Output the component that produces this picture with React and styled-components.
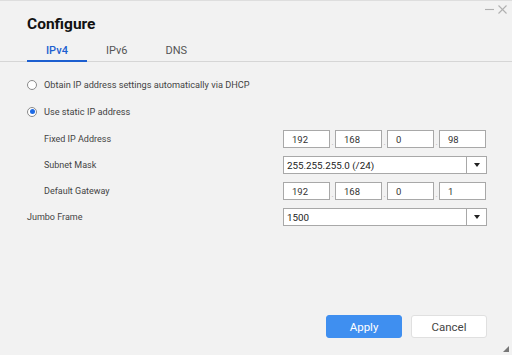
import React, { useState } from "react";
import styled, { createGlobalStyle } from "styled-components";

const GlobalStyle = createGlobalStyle`
  html, body {
    margin: 0;
    padding: 0;
    background: #f2f2f2;
  }
  * {
    box-sizing: border-box;
  }
`;

const Window = styled.div`
  position: relative;
  height: 355px;
  display: flex;
  flex-direction: column;
  background: #f2f2f2;
  border-top: 1px solid #dedede;
  font-family: Roboto, "Liberation Sans", sans-serif;
  color: #444;
`;

const TitleBar = styled.div`
  display: flex;
  justify-content: space-between;
  align-items: flex-start;
  padding: 13px 0 0 27px;
  height: 38px;
`;

const Title = styled.h1`
  margin: 0;
  font-size: 15.5px;
  font-weight: 700;
  color: #111;
  line-height: 20px;
`;

const Controls = styled.div`
  display: flex;
  gap: 4px;
  padding: 0 5px 0 0;
  margin-top: -9px;
  color: #b0b0b0;
`;

const TabBar = styled.div`
  display: flex;
  padding: 0 0 0 27px;
  border-bottom: 1px solid #d6d6d6;
  height: 23px;
`;

const Tab = styled.div`
  padding: 2px 19px 0;
  font-size: 11px;
  line-height: 19px;
  color: ${(p) => (p.$active ? "#1d5fd0" : "#555")};
  font-weight: ${(p) => (p.$active ? 500 : 400)};
  border-bottom: 2px solid ${(p) => (p.$active ? "#1d5fd0" : "transparent")};
  margin-bottom: -1px;
  cursor: pointer;
`;

const Content = styled.div`
  flex: 1;
  display: flex;
  flex-direction: column;
  padding: 9px 25px 0 27px;
`;

const RadioRow = styled.label`
  display: flex;
  align-items: center;
  height: 27px;
  font-size: 9.2px;
  color: #444;
  cursor: pointer;
`;

const RadioDot = styled.span`
  width: 10px;
  height: 10px;
  border-radius: 50%;
  border: 1px solid #8a8a8a;
  background: #fff;
  margin: 0 7px 0 0;
  display: flex;
  align-items: center;
  justify-content: center;
  &::after {
    content: "";
    width: 5px;
    height: 5px;
    border-radius: 50%;
    background: ${(p) => (p.$checked ? "#1d6ae5" : "transparent")};
  }
`;

const FieldGroup = styled.div`
  display: flex;
  flex-direction: column;
  margin-top: 1px;
`;

const FieldRow = styled.div`
  display: flex;
  align-items: center;
  justify-content: space-between;
  height: 26px;
  padding-left: ${(p) => (p.$indent ? "17px" : "0")};
`;

const Label = styled.span`
  font-size: 9px;
  color: #444;
`;

const IpBox = styled.div`
  display: flex;
  align-items: center;
  width: 204px;
`;

const Octet = styled.div`
  width: 47px;
  height: 18px;
  background: #fff;
  border: 1px solid #a8a8a8;
  font-size: 9.5px;
  color: #333;
  display: flex;
  align-items: center;
  padding-left: 8px;
`;

const Dot = styled.span`
  width: 5px;
  text-align: center;
  font-size: 8px;
  color: #aaa;
  align-self: flex-end;
  line-height: 10px;
`;

const Select = styled.div`
  width: 204px;
  height: 18px;
  display: flex;
  background: #fff;
  border: 1px solid #a8a8a8;
  font-size: 9.8px;
  color: #222;
`;

const SelectValue = styled.div`
  flex: 1;
  display: flex;
  align-items: center;
  padding-left: 3px;
`;

const SelectArrow = styled.div`
  width: 20px;
  border-left: 1px solid #a8a8a8;
  display: flex;
  align-items: center;
  justify-content: center;
  &::after {
    content: "";
    border-left: 3px solid transparent;
    border-right: 3px solid transparent;
    border-top: 4px solid #222;
  }
`;

const Footer = styled.div`
  display: flex;
  justify-content: flex-end;
  gap: 9px;
  padding: 0 25px 17px 0;
`;

const Button = styled.button`
  width: 76px;
  height: 23px;
  border-radius: 3px;
  font-family: Roboto, "Liberation Sans", sans-serif;
  font-size: 11.5px;
  cursor: pointer;
  border: 1px solid ${(p) => (p.$primary ? "#3f8ff0" : "#e0e0e0")};
  background: ${(p) => (p.$primary ? "#3f8ff0" : "#fff")};
  color: ${(p) => (p.$primary ? "#fff" : "#444")};
`;

const Grip = styled.svg`
  position: absolute;
  right: 3px;
  bottom: 3px;
`;

const IpField = ({ parts }) => (
  <IpBox>
    {parts.map((p, i) => (
      <React.Fragment key={i}>
        {i > 0 && <Dot>.</Dot>}
        <Octet>{p}</Octet>
      </React.Fragment>
    ))}
  </IpBox>
);

const App = () => {
  const [tab, setTab] = useState("IPv4");
  const [mode, setMode] = useState("static");

  return (
    <>
      <GlobalStyle />
      <Window>
        <TitleBar>
          <Title>Configure</Title>
          <Controls>
            <svg width="9" height="9" viewBox="0 0 9 9">
              <line x1="0" y1="4.5" x2="9" y2="4.5" stroke="currentColor" strokeWidth="1.1" />
            </svg>
            <svg width="9" height="9" viewBox="0 0 9 9">
              <line x1="0.5" y1="0.5" x2="8.5" y2="8.5" stroke="currentColor" strokeWidth="1.1" />
              <line x1="8.5" y1="0.5" x2="0.5" y2="8.5" stroke="currentColor" strokeWidth="1.1" />
            </svg>
          </Controls>
        </TitleBar>

        <TabBar>
          {["IPv4", "IPv6", "DNS"].map((t) => (
            <Tab key={t} $active={tab === t} onClick={() => setTab(t)}>
              {t}
            </Tab>
          ))}
        </TabBar>

        <Content>
          <RadioRow onClick={() => setMode("dhcp")}>
            <RadioDot $checked={mode === "dhcp"} />
            Obtain IP address settings automatically via DHCP
          </RadioRow>
          <RadioRow onClick={() => setMode("static")}>
            <RadioDot $checked={mode === "static"} />
            Use static IP address
          </RadioRow>

          <FieldGroup>
            <FieldRow $indent>
              <Label>Fixed IP Address</Label>
              <IpField parts={["192", "168", "0", "98"]} />
            </FieldRow>
            <FieldRow $indent>
              <Label>Subnet Mask</Label>
              <Select>
                <SelectValue>255.255.255.0 (/24)</SelectValue>
                <SelectArrow />
              </Select>
            </FieldRow>
            <FieldRow $indent>
              <Label>Default Gateway</Label>
              <IpField parts={["192", "168", "0", "1"]} />
            </FieldRow>
            <FieldRow>
              <Label>Jumbo Frame</Label>
              <Select>
                <SelectValue>1500</SelectValue>
                <SelectArrow />
              </Select>
            </FieldRow>
          </FieldGroup>
        </Content>

        <Footer>
          <Button $primary>Apply</Button>
          <Button>Cancel</Button>
        </Footer>

        <Grip width="6" height="6" viewBox="0 0 6 6">
          <polygon points="6,0 6,6 0,6" fill="#777" />
        </Grip>
      </Window>
    </>
  );
};

export default App;
